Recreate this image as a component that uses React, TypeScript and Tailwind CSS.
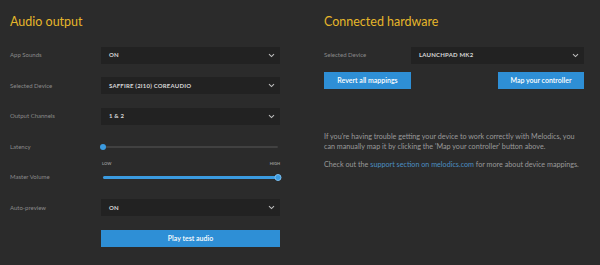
const font = { fontFamily: "Lato, 'Open Sans', sans-serif" };

function Chevron() {
  return (
    <svg width="7" height="5" viewBox="0 0 7 5" className="shrink-0">
      <path d="M1 1.2 L3.5 3.6 L6 1.2" fill="none" stroke="#bdbdbd" strokeWidth="1.1" />
    </svg>
  );
}

function Select({ value }: { value: string }) {
  return (
    <div className="flex h-[17px] w-full items-center justify-between bg-[#222222] pl-[8px] pr-[5px]">
      <span className="text-[6px] font-bold uppercase leading-none tracking-[0.2px] text-[#d6d6d6]">{value}</span>
      <Chevron />
    </div>
  );
}

function Row({ label, children }: { label: string; children: React.ReactNode }) {
  return (
    <div className="flex h-[30.5px] items-center">
      <div className="w-[91px] shrink-0 text-[6px] leading-none text-[#8a8a8a]">{label}</div>
      <div className="relative flex h-full flex-1 items-center">{children}</div>
    </div>
  );
}

function Slider({ value, active }: { value: number; active?: boolean }) {
  return (
    <div className="relative mx-[2px] flex h-[8px] flex-1 items-center">
      <div className="h-[2px] w-full rounded-full bg-[#414141]" />
      <div
        className="absolute left-0 h-[3px] rounded-full bg-[#3b9be0]"
        style={{ width: `${value}%` }}
      />
      <div
        className={
          active
            ? "absolute h-[7px] w-[7px] -translate-x-1/2 rounded-full border border-[#7cc0f0] bg-[#3b9be0]"
            : "absolute h-[6px] w-[6px] -translate-x-1/2 rounded-full bg-[#3b9be0]"
        }
        style={{ left: `${value}%` }}
      />
    </div>
  );
}

function BlueButton({ label, className }: { label: string; className: string }) {
  return (
    <button className={"flex items-center justify-center bg-[#2e8fd6] text-[7px] font-semibold text-white " + className}>
      {label}
    </button>
  );
}

export default function App() {
  return (
    <div className="flex h-[265px] w-[600px] bg-[#2b2b2b]" style={font}>
      <div className="w-[280px] pl-[10px]">
        <h2 className="mt-[14px] mb-[10px] h-[16px] text-[12.5px] leading-[16px] text-[#e6b62a]">Audio output</h2>
        <Row label="App Sounds">
          <Select value="On" />
        </Row>
        <Row label="Selected Device">
          <Select value="Saffire (2i10) CoreAudio" />
        </Row>
        <Row label="Output Channels">
          <Select value="1 & 2" />
        </Row>
        <Row label="Latency">
          <Slider value={0} />
        </Row>
        <Row label="Master Volume">
          <div className="absolute left-[1px] right-0 top-[-1px] flex justify-between text-[4px] font-bold uppercase text-[#9a9a9a]">
            <span>Low</span>
            <span>High</span>
          </div>
          <Slider value={100} active />
        </Row>
        <Row label="Auto-preview">
          <Select value="On" />
        </Row>
        <Row label="">
          <BlueButton label="Play test audio" className="h-[17px] w-full" />
        </Row>
      </div>
      <div className="ml-[44px] w-[260px]">
        <h2 className="mt-[14px] mb-[10px] h-[16px] text-[12.5px] leading-[16px] text-[#e6b62a]">Connected hardware</h2>
        <div className="flex h-[30.5px] items-center">
          <div className="w-[87px] shrink-0 text-[6px] leading-none text-[#8a8a8a]">Selected Device</div>
          <Select value="Launchpad MK2" />
        </div>
        <div className="mt-[1px] flex justify-between">
          <BlueButton label="Revert all mappings" className="h-[17px] w-[87px]" />
          <BlueButton label="Map your controller" className="h-[17px] w-[86px]" />
        </div>
        <p className="mt-[43px] text-[7.2px] leading-[10px] text-[#9a9a9a]">
          If you're having trouble getting your device to work correctly with Melodics, you can manually map it by clicking the 'Map your controller' button above.
        </p>
        <p className="mt-[8px] text-[7.2px] leading-[10px] text-[#9a9a9a]">
          Check out the <span className="text-[#4b8fc2]">support section on melodics.com</span> for more about device mappings.
        </p>
      </div>
    </div>
  );
}
